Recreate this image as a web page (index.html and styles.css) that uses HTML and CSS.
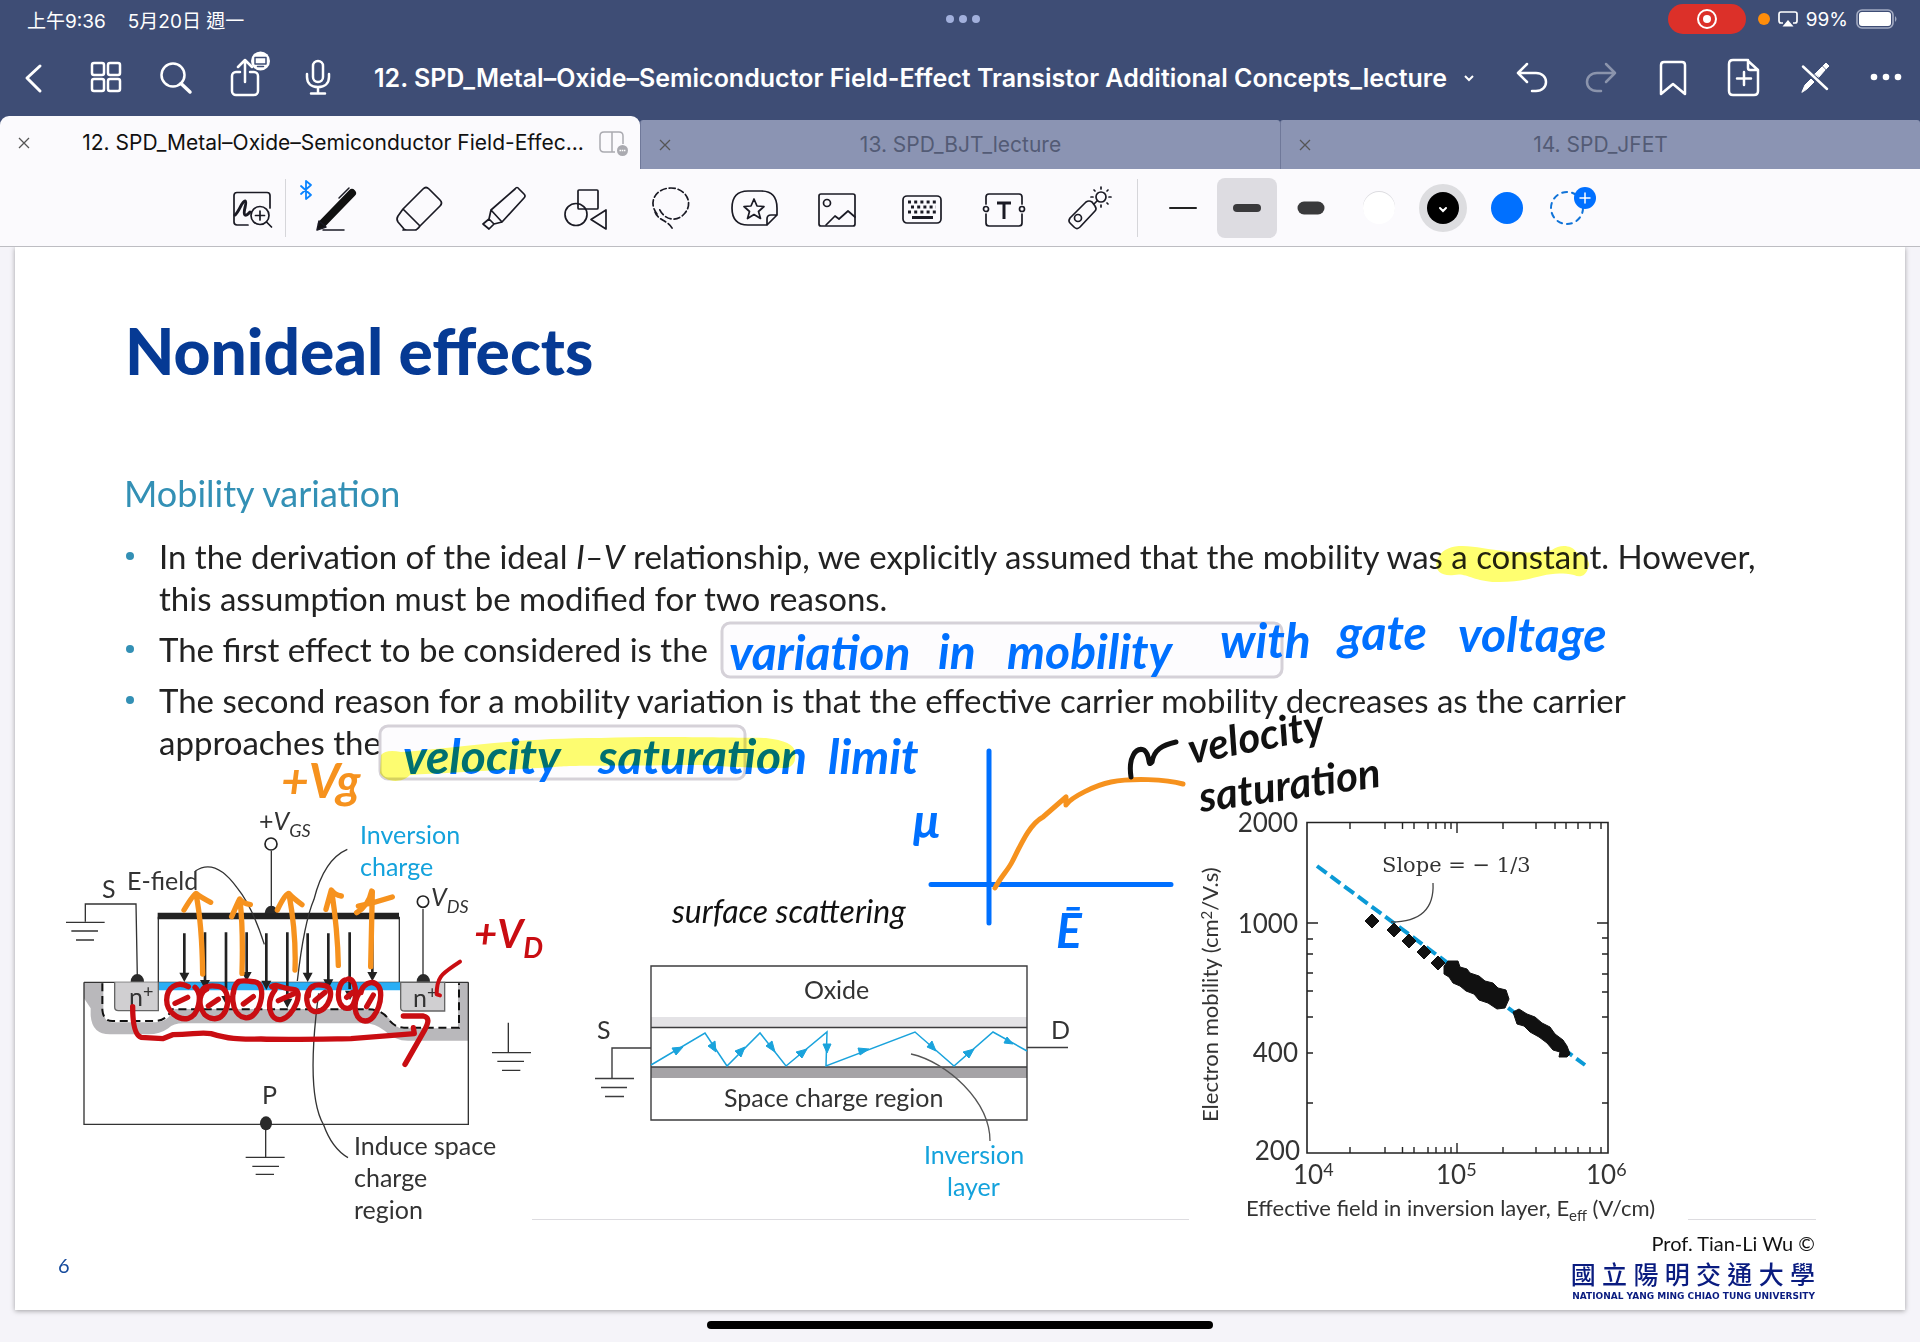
FILE: index.html
```html
<!DOCTYPE html>
<html lang="zh-Hant">
<head>
<meta charset="utf-8">
<title>12. SPD_Metal–Oxide–Semiconductor Field-Effect Transistor Additional Concepts_lecture</title>
<meta name="viewport" content="width=device-width, initial-scale=1">
<link rel="stylesheet" href="styles.css">
</head>
<body>
<header class="topbar">
  <div class="status">
    <div class="status-side"><span>上午9:36</span><span>5月20日 週一</span></div>
    <svg class="multitask" width="36" height="12" viewBox="0 0 36 12" aria-hidden="true"><circle cx="5" cy="6" r="4"/><circle cx="18" cy="6" r="4"/><circle cx="31" cy="6" r="4"/></svg>
    <div class="status-side status-right">
      <span class="rec"><svg width="24" height="24" viewBox="0 0 24 24"><circle cx="12" cy="12" r="9" fill="none" stroke="#fff" stroke-width="2"/><circle cx="12" cy="12" r="4" fill="#fff"/></svg></span>
      <span class="mic-dot"></span>
      <svg width="20" height="18" viewBox="0 0 20 18"><path d="M5 13H3a2 2 0 0 1-2-2V4a2 2 0 0 1 2-2h14a2 2 0 0 1 2 2v7a2 2 0 0 1-2 2h-2" fill="none" stroke="#fff" stroke-width="1.7"/><path d="M10 10l5.500 6.500h-11z" fill="#fff"/></svg>
      <span>99%</span>
      <svg class="battery" width="42" height="20" viewBox="0 0 42 20"><rect x="1" y="1" width="36" height="18" rx="5" fill="none" stroke="#a3abc2" stroke-width="1.600"/><rect x="3" y="3" width="32" height="14" rx="3" fill="#fff"/><path d="M39 7q3 3 0 6z" fill="#a3abc2"/></svg>
    </div>
  </div>
  <nav class="nav">
    <div class="nav-group">
      <button class="icon-btn" aria-label="Back"><svg viewBox="0 0 48 48"><path d="M30 12 17 24l13 13" stroke-width="3"/></svg></button>
      <button class="icon-btn" aria-label="Pages"><svg viewBox="0 0 48 48"><rect x="11" y="9" width="12" height="12" rx="2"/><rect x="27" y="9" width="12" height="12" rx="2"/><rect x="11" y="25" width="12" height="12" rx="2"/><rect x="27" y="25" width="12" height="12" rx="2"/></svg></button>
      <button class="icon-btn" aria-label="Search"><svg viewBox="0 0 48 48"><circle cx="21" cy="21" r="11.500"/><path d="M29 29.500 38 38" stroke-width="3.500"/></svg></button>
      <button class="icon-btn" aria-label="Share"><svg viewBox="0 0 48 48"><path d="M17 18h-4a4 4 0 0 0-4 4v15a4 4 0 0 0 4 4h18a4 4 0 0 0 4-4V22a4 4 0 0 0-4-4h-4M22 28V7M15 13l7-7 7 7"/><circle cx="37.500" cy="7" r="9.500" fill="#fff" stroke="none"/><path d="M32 3.500h11v6.500H32zM34.500 12.500h6" stroke="#3e4d75" stroke-width="1.500"/></svg></button>
      <button class="icon-btn" aria-label="Record"><svg viewBox="0 0 48 48"><rect x="19" y="7" width="10" height="21" rx="5"/><path d="M13 20v3c0 6 4 10 11 10s11-4 11-10v-3M24 33v6M17 39.500h14"/></svg></button>
    </div>
    <button class="doc-title"><span>12. SPD_Metal–Oxide–Semiconductor Field-Effect Transistor Additional Concepts_lecture</span><svg width="12" height="12" viewBox="0 0 12 12"><path d="M2 4l4 4 4-4"/></svg></button>
    <div class="nav-group">
      <button class="icon-btn" aria-label="Undo"><svg viewBox="0 0 48 48"><path d="M20 10 11 19l9 9M11 19h18c6 0 10 4 10 9s-4 9-10 9h-4"/></svg></button>
      <button class="icon-btn faded" aria-label="Redo"><svg viewBox="0 0 48 48"><path d="M28 10l9 9-9 9M37 19H19c-6 0-10 4-10 9s4 9 10 9h4"/></svg></button>
      <button class="icon-btn" aria-label="Bookmark"><svg viewBox="0 0 48 48"><path d="M12 40V11q0-3 3-3h18q3 0 3 3v29L24 30z"/></svg></button>
      <button class="icon-btn" aria-label="Add page"><svg viewBox="0 0 48 48"><path d="M27 6H13q-4 0-4 4v27q0 4 4 4h21q4 0 4-4V16zM28 6v8q0 2 2 2h8M24 18v13M17 24.500h14"/></svg></button>
      <button class="icon-btn" aria-label="Read only"><svg viewBox="0 0 48 48"><path d="M12 12.500 36 35"/><path d="M11 38l3-7 6-6 3 3-7 7zM24 20l7-7 3 3-6 7zM32 12l3-3 3 3-3 3z" fill="#fff" stroke-width="1"/></svg></button>
      <button class="icon-btn" aria-label="More"><svg viewBox="0 0 48 48"><g fill="#fff" stroke="none"><circle cx="12" cy="23" r="3.300"/><circle cx="24" cy="23" r="3.300"/><circle cx="36" cy="23" r="3.300"/></g></svg></button>
    </div>
  </nav>
  <div class="tabs">
    <div class="tab active"><button class="close" aria-label="Close tab"><svg viewBox="0 0 12 12"><path d="M1 1l10 10M11 1 1 11"/></svg></button><a href="#slide">12. SPD_Metal–Oxide–Semiconductor Field-Effec...</a><svg class="split" width="30" height="26" viewBox="0 0 30 26"><path d="M16 21H5q-4 0-4-4V5q0-4 4-4h15q4 0 4 4v8M13 1v20" fill="none" stroke="#aaaab0" stroke-width="1.500"/><circle cx="23.500" cy="19.500" r="5.500" fill="#aaaab0"/><path d="M20.500 19.500h1.500m.7 0h1.500m.7 0h1.500" stroke="#fff" stroke-width="1.500"/></svg></div>
    <div class="tab"><button class="close" aria-label="Close tab"><svg viewBox="0 0 12 12"><path d="M1 1l10 10M11 1 1 11"/></svg></button><a href="#bjt">13. SPD_BJT_lecture</a></div>
    <div class="tab"><button class="close" aria-label="Close tab"><svg viewBox="0 0 12 12"><path d="M1 1l10 10M11 1 1 11"/></svg></button><a href="#jfet">14. SPD_JFET</a></div>
  </div>
</header>

<div class="tools" role="toolbar" aria-label="Drawing tools">
  <button class="tool narrow" aria-label="Zoom window"><svg viewBox="0 0 48 48"><path d="M20 41H9q-3 0-3-3V11.500q0-3 3-3h30q3 0 3 3V24"/><path d="M7 31c4-3 7-14 10-14 3 1-3 12 0 14 2 1 3-1 5-3" stroke-width="3"/><circle cx="32" cy="31.500" r="9"/><path d="M38.500 38l5 5M27.500 31.500h9M32 27v9"/></svg></button>
  <span class="rule"></span>
  <button class="tool" aria-label="Pen"><svg viewBox="0 0 48 48"><path d="M40 9 10 40" stroke="#111" stroke-width="8"/><path d="M5 46l2-9 7 6zM11 46h21M27 14l10-10" stroke-width="1.500" fill="#111"/><path d="M-11 2l10 9-5 4V-3l5 4-10 9" stroke="#0a84ff" stroke-width="1.800"/></svg></button>
  <button class="tool" aria-label="Eraser"><svg viewBox="0 0 48 48"><path d="M27 5q3-3 6 0l11 11q3 3 0 6L24 42 7 25zM7 25l-5 7q-2 3 0 6l6 7q1 1 3 1h8q2 0 5-4M7 46h13"/></svg></button>
  <button class="tool" aria-label="Highlighter"><svg viewBox="0 0 48 48"><path d="M35 5q2-3 4 0l5 5q2 2 0 4L22 38 11 26zM11 26l-2 9 5 5 8-2M9 35l-6 5 6 5 5-5"/></svg></button>
  <button class="tool" aria-label="Shapes"><svg viewBox="0 0 48 48"><rect x="14" y="6" width="20" height="19" rx="1"/><circle cx="12" cy="30.500" r="11"/><path d="M27 35.500 42 26v19z"/></svg></button>
  <button class="tool" aria-label="Lasso"><svg viewBox="0 0 48 48"><path d="M9 30c-10-13 0-26 14-26s23 14 14 25-22 6-26-5M7 28c3 9 14 8 18 18" stroke-dasharray="6 3"/></svg></button>
  <button class="tool" aria-label="Sticker"><svg viewBox="0 0 48 48"><path d="M35 41H16Q0 41 0 24T16 7h13q16 0 16 17v7L35 41v-6q0-4 4-4h6"/><path d="M22 15l3 7 7 .5-5.500 5 2 7-6.500-4-6.500 4 2-7-5.500-5 7-.5z"/></svg></button>
  <button class="tool" aria-label="Image"><svg viewBox="0 0 48 48"><rect x="3" y="10" width="36" height="32" rx="2"/><circle cx="11" cy="19" r="3.500"/><path d="M10 41l9-9 4 3 9-8 7 6"/></svg></button>
  <button class="tool" aria-label="Keyboard"><svg viewBox="0 0 48 48"><rect x="3" y="12" width="38" height="27" rx="4"/><g stroke-width="3"><path d="M8 18h29M11 23h25M8 28h29" stroke-dasharray="3 3.200" stroke-linecap="butt"/><path d="M12 33.500h21" stroke-linecap="butt"/></g></svg></button>
  <button class="tool" aria-label="Text"><svg viewBox="0 0 48 48"><path d="M2 20v-7q0-3 3-3h30q3 0 3 3v7M2 30v9q0 3 3 3h30q3 0 3-3v-9"/><circle cx="2" cy="25" r="2.500"/><circle cx="38" cy="25" r="2.500"/><path d="M13 19h14M20 19v16" stroke-width="3" stroke-linecap="butt"/></svg></button>
  <button class="tool" aria-label="Laser pointer"><svg viewBox="0 0 48 48"><path d="M2 34 18 18q3-2 6 0l3 4q2 3 0 5L12 43q-3 3-6 0l-4-4q-2-2 0-5M26 20l3-3"/><circle cx="10" cy="34" r="3.500"/><circle cx="33" cy="13" r="5"/><path d="M33 5V3M33 23v-2M25 13h-2M43 13h-2M27 7l-1-1M39 7l1-1M39 19l1 1"/></svg></button>
  <span class="rule"></span>
  <div class="widths">
    <button class="choice" aria-label="Thin"><svg viewBox="0 0 60 60"><path d="M17 30h26" stroke="#222" stroke-width="2"/></svg></button>
    <button class="choice chosen" aria-label="Medium"><svg viewBox="0 0 60 60"><path d="M20 30h20" stroke="#3a3a3c" stroke-width="8"/></svg></button>
    <button class="choice" aria-label="Thick"><svg viewBox="0 0 60 60"><path d="M23 30h14" stroke="#3a3a3c" stroke-width="13"/></svg></button>
  </div>
  <div class="colors">
    <button class="choice" aria-label="White"><svg viewBox="0 0 60 60"><circle cx="30" cy="29" r="16" fill="#dcdce0"/><circle cx="30" cy="30" r="16" fill="#fff"/></svg></button>
    <button class="choice" aria-label="Black"><svg viewBox="0 0 60 60"><circle cx="30" cy="30" r="24" fill="#dddde0"/><circle cx="30" cy="30" r="16" fill="#000"/><path d="M27 30l3 3 3-3" stroke="#fff" stroke-width="2"/></svg></button>
    <button class="choice" aria-label="Blue"><svg viewBox="0 0 60 60"><circle cx="30" cy="30" r="16" fill="#0070ff"/></svg></button>
    <button class="choice" aria-label="Add colour"><svg viewBox="0 0 60 60"><circle cx="26" cy="30" r="16" stroke="#1073d8" stroke-width="2" stroke-dasharray="5 5"/><circle cx="44" cy="20" r="11" fill="#0070ff"/><path d="M39 20h10M44 15v10" stroke="#fff" stroke-width="1.500"/></svg></button>
  </div>
</div>

<main class="desk">
<article class="slide" id="slide">
  <h1>Nonideal effects</h1>
  <h2>Mobility variation</h2>
  <ul class="points">
    <li>In the derivation of the ideal <i>I–V</i> relationship, we explicitly assumed that the mobility was a constant. However, <br>this assumption must be modified for two reasons.</li>
    <li>The first effect to be considered is the</li>
    <li>The second reason for a mobility variation is that the effective carrier mobility decreases as the carrier <br>approaches the</li>
  </ul>

  <div class="figures">
    <svg class="fig fig-device" viewBox="60 790 480 440" role="img" aria-label="MOSFET cross-section">
      <g transform="translate(60 760) scale(.33333)" fill="none" stroke="#333" stroke-width="4">
        <path d="M72 667h58v90q4 28 24 30h130q40 0 60-40h560q60 0 80 25 30 40 50 33h160V667h30v175h-180q-40 0-70-30-30-22-60-22H370q-30 0-45 15-25 18-60 18H150q-55 0-58-58v-20l-20-30z" fill="#b9b8bb" stroke="none"/>
        <path d="M72 667v426h1153V667M72 667h1153"/>
        <path d="M127 670v80q3 33 30 33h130q30 0 50-35h585q40 0 60 25 20 30 50 30h165V670" stroke="#111" stroke-width="6" stroke-dasharray="24 14"/>
        <path d="M295 667v85H175q-11 0-11-11v-74M1022 667v76q0 10 12 10h120v-86z" fill="#d0cfd1" stroke="#666"/>
        <path d="M295 470v197M1018 470v197"/>
        <path d="M297 679h723" stroke="#2aaef5" stroke-width="24"/>
        <path d="M293 468h724" stroke="#222" stroke-width="19"/>
        <path d="M634 272v180M1089 447v205M76 485v-53h152l4 220"/>
        <path d="M18 487h116M34 513h80M48 540h54M617 1093v99M557 1192h117M577 1219h80M587 1243h55M1345 788v90M1296 878h117M1312 904h80M1326 931h55"/>
        <circle cx="633" cy="252" r="18" stroke="#222" stroke-width="5"/><circle cx="1089" cy="425" r="17" stroke="#222" stroke-width="5"/>
        <g fill="#2a2a2a" stroke="none"><path d="M614 460a20 23 0 0 1 40 0zM212 665a20 23 0 0 1 40 0zM1070 665a20 23 0 0 1 40 0z"/><ellipse cx="618" cy="1090" rx="18" ry="21"/></g>
        <g stroke="#222" stroke-width="8"><path d="M373 520v125M435 517v150M498 517v200M560 517v130M619 520v150M682 517v205M743 520v125M805 520v145M869 517v170M937 520v125"/></g>
        <path d="M358 638h30l-15 28zM420 660h30l-15 28zM484 708h30l-15 28zM545 636h30l-15 28zM604 662h30l-15 28zM667 716h30l-15 28zM728 638h30l-15 28zM790 658h30l-15 28zM855 692h30l-15 28zM922 636h30l-15 28z" fill="#222" stroke="none"/>
        <path d="M406 333q60-40 125 50 45 55 82 170M862 268q-70 30-100 150-30 70-50 245M776 700q-40 300 15 395 25 70 73 98"/>
      </g>
      <g class="label">
        <text x="259" y="830">+<tspan class="it">V</tspan><tspan class="it sub" dy="7">GS</tspan></text>
        <text x="360" y="844" class="cyan">Inversion</text><text x="360" y="876" class="cyan">charge</text>
        <text x="102" y="898">S</text><text x="127" y="890">E-field</text>
        <text x="431" y="906"><tspan class="it">V</tspan><tspan class="it sub" dy="7">DS</tspan></text>
        <text x="129" y="1006">n<tspan class="sub" dy="-8">+</tspan></text><text x="413" y="1007">n<tspan class="sub" dy="-8">+</tspan></text>
        <text x="262" y="1104">P</text>
        <text x="354" y="1155">Induce space</text><text x="354" y="1187">charge</text><text x="354" y="1219">region</text>
      </g>
    </svg>

    <svg class="fig fig-scatter" viewBox="560 790 560 440" role="img" aria-label="Surface scattering">
      <path d="M651 1017h376v10H651z" fill="#e4e3e6"/><path d="M651 1067h376v11H651z" fill="#a5a3a6"/>
      <path d="M651 966h376v154H651zM651 1027.500h376M651 1067h376M1027 1047.500h41M651 1048h-39v30M595 1078.500h39M601 1087.500h26M605 1096.500h19" fill="none" stroke="#3c3c3e" stroke-width="1.400"/>
      <path d="M651 1065l54-32 22 33 33-33 26 33 41-34-1 34 89-34 39 34 39-34 34 19" fill="none" stroke="#1aa3dc" stroke-width="1.500"/>
      <path d="M683 1047l-7 8-4-7zM716 1052l-8-6 7-5zM745 1047l-4 10-6-6zM775 1052l-9-6 6-5zM807 1049l-5 9-6-6zM827 1053l-4-9h8zM869 1049l-9 6-2-7zM936 1051l-9-4 5-6zM974 1049l-5 9-6-6zM1013 1044l-9-1 3-6z" fill="#1aa3dc" stroke="#1aa3dc"/>
      <path d="M911 1054c36 8 79 47 79 87" fill="none" stroke="#555" stroke-width="1.300"/>
      <g class="label">
        <text x="672" y="923" class="caption">surface scattering</text>
        <text x="804" y="999">Oxide</text><text x="724" y="1107">Space charge region</text>
        <text x="597" y="1039">S</text><text x="1051" y="1039">D</text>
        <text x="924" y="1164" class="cyan">Inversion</text><text x="947" y="1196" class="cyan">layer</text>
      </g>
    </svg>

    <svg class="fig fig-plot" viewBox="1160 790 560 440" role="img" aria-label="Electron mobility against effective field">
      <path d="M1307 822.500h301V1153h-301z" fill="none" stroke="#222" stroke-width="1.600"/>
      <path d="M1350 823v6m35-6v6m17.500-6v6m11.500-6v6m14-6v6m8-6v6m9-6v6m6-6v6m6-6v10m46-10v6m33-6v6m19-6v6m11-6v6m12-6v6m12-6v6m11-6v6M1350 1153v-6m35 6v-6m17.500 6v-6m11.500 6v-6m14 6v-6m8 6v-6m9 6v-6m6 6v-6m6 6v-10m46 10v-6m33 6v-6m19 6v-6m11 6v-6m12 6v-6m12 6v-6m11 6v-6M1307 923h11m-11 16h6m-6 15h6m-6 19h6m-6 18h6m-6 26h6m-6 36h6m-6 50h6M1608 923h-11m11 15h-6m6 16h-6m6 20h-6m6 18h-6m6 25h-6m6 36h-6m6 50h-6" fill="none" stroke="#222" stroke-width="1.400"/>
      <path d="M1317 866l268 199" stroke="#0b9ad6" stroke-width="4" stroke-dasharray="12 5"/>
      <path d="M1433 883q2 39-42 39" fill="none" stroke="#444" stroke-width="1.300"/>
      <g fill="#111" stroke="#111" stroke-linejoin="round"><path d="M1372 914l7 7-7 7-7-7zM1394 923l7 7-7 7-7-7zM1409 934l7 7-7 7-7-7zM1424 945l7 7-7 7-7-7zM1438 956l7 7-7 7-7-7z"/><path d="M1444 966l4-5h10l2 6 7 2 3 4 9 3 6 5 8 2 5 5 8 2 3 9-4 9-8 1-9-6-9-3-5-6-8-3-6-5-7-3-4-6-5-3z"/><path d="M1513 1012l6-3 8 5 8 3 7 6 8 4 5 7 8 6 4 6 3 8-3 3h-8l1-5-7-2-6-7-8-6-9-5-6-6-7-2z"/></g>
      <g class="label plot-label">
        <text x="1298" y="832" text-anchor="end">2000</text><text x="1298" y="933" text-anchor="end">1000</text><text x="1298" y="1062" text-anchor="end">400</text><text x="1300" y="1160" text-anchor="end">200</text>
        <text x="1293" y="1184">10<tspan class="sub" dy="-8">4</tspan></text><text x="1436" y="1184">10<tspan class="sub" dy="-8">5</tspan></text><text x="1586" y="1184">10<tspan class="sub" dy="-8">6</tspan></text>
        <text x="1246" y="1216" class="axis">Effective field in inversion layer, E<tspan class="subs" dy="5">eff</tspan><tspan dy="-5"> (V/cm)</tspan></text>
        <text transform="translate(1218 1122) rotate(-90)" class="axis">Electron mobility (cm<tspan class="subs" dy="-6">2</tspan><tspan dy="6">/V.s)</tspan></text>
        <text x="1382" y="872" class="slope">Slope = − 1/3</text>
      </g>
    </svg>
  </div>

  <footer class="foot">
    <div class="foot-rule"><span></span><span></span></div>
    <div class="foot-row">
      <span class="page">6</span>
      <div class="credit"><span class="prof">Prof. Tian-Li Wu ©</span><strong>國 立 陽 明 交 通 大 學</strong><small>NATIONAL YANG MING CHIAO TUNG UNIVERSITY</small></div>
    </div>
  </footer>

  <svg class="ink" viewBox="15 247 1890 1063" aria-label="Handwritten notes">
    <g fill="#fdfcfe" stroke="#d5d1d8" stroke-width="3"><rect x="722" y="623" width="560" height="54" rx="8"/><rect x="380" y="726" width="365" height="53" rx="8"/></g>
    <g class="hand blue">
      <text x="729" y="670">variation</text><text x="938" y="669">in</text><text x="1007" y="669">mobility</text><text x="1220" y="658">with</text><text x="1338" y="650">gate</text><text x="1458" y="652">voltage</text>
      <text x="403" y="774">velocity</text><text x="598" y="774">saturation</text><text x="828" y="774">limit</text>
      <text x="913" y="838">μ</text><text x="1056" y="948">Ē</text>
    </g>
    <g class="marker"><path d="M1438 558c8-16 30-12 44-10 30 5 55 6 70 2 8-6 20-5 24 2 12 4 15 12 12 16-2 8-8 10-14 7-30-6-38 8-78 7-24-1-30-10-42-7-18 2-20-10-16-17z"/><path d="M381 755q5-6 20-3c50-3 110-14 200-14 60-2 130 0 165 0q28 3 29 14 2 15-10 16c-60 0-60-3-100-3-50 1-120 0-130 2-50 3-110 6-145 8-10 10-26 6-30-2z"/></g>
    <path d="M989 751v172M931 884.500h240" stroke="#0070ff" stroke-width="5"/>
    <path d="M995 888c5-10 13-18 17-26 10-20 18-38 31-45l23-20v8c5-8 30-20 45-23 20-4 55-3 72 2" stroke="#f6921e" stroke-width="5"/>
    <path d="M1131 777c-3-20 5-30 13-27 7 5 3 18 8 12 2-12 10-17 24-20" stroke="#111" stroke-width="5"/>
    <g class="hand black"><text transform="translate(1191 764) rotate(-11)">velocity</text><text transform="translate(1201 812) rotate(-8)">saturation</text></g>
    <g class="hand orange"><text x="281" y="798">+Vg</text></g>
    <g class="hand red"><text x="474" y="948">+V<tspan class="sub" dy="10">D</tspan></text></g>
    <g transform="translate(60 760) scale(.33333)" stroke-width="16">
      <path d="M372 450q30-50 36-50 14 12 44 27M408 402q18 90 20 240M515 470q15-35 24-53 8 12 32 17M540 420q10 90 6 220M652 450q24-50 34-50 12 14 40 34M687 402q22 120 18 228M798 448l16-58q10 15 30 18M815 392q18 120 20 224M890 458q35-20 45-65M895 438q50-10 102-27M937 395l-5 225" stroke="#f6921e"/>
      <g stroke="#c90d12"><path d="M385 680c-35-20-65 5-65 40s35 62 65 55 45-70 20-93M345 730l38-18M440 688c-30 10-28 82 20 88s60-90 15-97-50 10-55 30M445 738l30-20M535 665c-25 20-25 100 20 108s70-100 30-107-60-10-65 35M550 732l30-22M645 690c-30 40-15 95 20 88s70-90 35-90-50-20-65-8M655 722l45-20M760 680c-30 10-25 75 10 75s60-70 25-78-50 5-50 30M765 722l30-25M855 660c-25 10-30 80 5 85s35-90 5-88M860 712l18-15M905 690c-30 30-25 90 10 93s60-80 40-105-50 0-52 20M920 740l20-35"/><path d="M218 740c0 40 5 85 25 92l65 4 30-12c60 0 80-8 115-3 50 15 80 18 150 16 80 3 200 0 270-1l190-15-3-18M1030 768h60c20 5 15 20 5 40l-60 105"/><path d="M1200 605c-50 35-70 40-70 98l10 3" stroke-width="12"/></g>
    </g>
  </svg>
</article>
<div class="home-bar"></div>
</main>
</body>
</html>
```
FILE: styles.css
```css
* { box-sizing: border-box; }
body { margin: 0; min-height: 100vh; display: flex; flex-direction: column; background: #f5f4f9; font-family: Inter, "Noto Sans CJK TC", sans-serif; }
button { border: 0; padding: 0; background: none; font: inherit; color: inherit; }
a { color: inherit; text-decoration: none; }
svg { display: block; overflow: visible; }

.topbar { background: #3e4d75; color: #fff; }
.status { display: grid; grid-template-columns: 1fr auto 1fr; align-items: center; height: 38px; padding: 0 22px 0 27px; font-size: 19px; }
.status-side { display: flex; align-items: center; gap: 22px; }
.status-right { justify-content: flex-end; gap: 8px; }
.multitask { fill: #a2b0dc; }
.rec { display: flex; align-items: center; justify-content: center; width: 78px; height: 36px; border-radius: 18px; background: #dc3029; margin-right: 4px; }
.rec { height: 30px; }
.mic-dot { width: 12px; height: 12px; border-radius: 6px; background: #ff8d0a; }

.nav { display: flex; align-items: center; justify-content: space-between; height: 78px; padding: 2px 10px 0; }
.nav-group { display: flex; gap: 23px; }
.icon-btn { width: 48px; height: 48px; }
.icon-btn svg, .tool svg { width: 48px; height: 48px; fill: none; stroke: #fff; stroke-width: 2.5; stroke-linecap: round; stroke-linejoin: round; }
.faded { opacity: .4; }
.doc-title { display: flex; align-items: center; gap: 16px; font-size: 25px; font-weight: 600; white-space: nowrap; }
.doc-title svg { fill: none; stroke: #fff; stroke-width: 2; }

.tabs { display: grid; grid-template-columns: repeat(3, 1fr); align-items: end; height: 53px; }
.tab { position: relative; display: flex; align-items: center; justify-content: center; height: 49px; background: #8b94b3; color: #535b75; border-left: 1px solid #6f7899; border-radius: 3px 3px 0 0; font-size: 21px; }
.tab.active { height: 53px; background: #fbfafd; color: #111; border: 0; border-radius: 9px 9px 0 0; padding-left: 26px; }
.close { position: absolute; left: 18px; top: 50%; width: 12px; height: 12px; margin-top: -6px; }
.close svg { width: 12px; height: 12px; stroke: #555; stroke-width: 1.3; }
.split { position: absolute; right: 11px; top: 15px; }

.tools { display: flex; align-items: center; height: 78px; padding-left: 219px; background: #fbfafd; border-bottom: 1px solid #bdbdc2; }
.tool { display: flex; justify-content: center; width: 84px; flex: none; }
.tool svg { stroke: #1a1a24; stroke-width: 1.7; }
.tool.narrow { width: 66px; }
.rule { width: 1px; height: 58px; flex: none; margin: 0 15px 0 3px; background: #d6d6da; }
.narrow + .rule { margin: 0 8px 0 0; }
.widths, .colors { display: flex; gap: 4px; }
.colors { margin-left: 8px; }
.choice { width: 60px; height: 60px; border-radius: 8px; }
.choice svg { width: 60px; height: 60px; fill: none; stroke-linecap: round; }
.chosen { background: #dddce1; }

.desk { flex: 1; padding: 0 15px 12px; }
.slide { position: relative; background: #fff; box-shadow: 0 1px 5px rgba(0, 0, 0, .35); clip-path: inset(0 -10px -10px -10px); padding-bottom: 8px; font-family: Lato, "Noto Sans CJK TC", sans-serif; color: #222; }
h1 { margin: 0; padding: 68px 110px 0; font-size: 64px; line-height: 72px; font-weight: 900; color: #063a94; }
h2 { margin: 0; padding: 82px 109px 0; font-size: 36px; line-height: 48px; font-weight: 400; color: #3390b5; }
.points { list-style: none; margin: 0; padding: 18px 109px 0; display: flex; flex-direction: column; gap: 9px; font-size: 33px; line-height: 42px; white-space: nowrap; }
.points li { position: relative; padding-left: 35px; }
.points li::before { content: ""; position: absolute; left: 2px; top: 17px; width: 8px; height: 8px; border-radius: 4px; background: #3390b5; }

.figures { display: flex; padding: 27px 185px 0 45px; }
.fig { flex: 560 1 0; min-width: 0; }
.fig-device { flex-grow: 480; margin-right: 20px; }
.fig-scatter { margin-right: 40px; }
.label { font-size: 25px; fill: #333; }
.it { font-style: italic; }
.sub { font-size: 18px; }
.cyan { fill: #14a2dc; }
.caption { font-size: 32px; font-style: italic; fill: #111; }
.plot-label { font-size: 26px; }
.axis { font-size: 22px; }
.subs { font-size: 15px; }
.slope { font-family: "DejaVu Serif", serif; font-size: 21px; }

.foot-rule { display: flex; justify-content: space-between; margin: -11px 89px 0 517px; }
.foot-rule span { width: 657px; height: 1px; background: #dddce0; }
.foot-rule span + span { width: 128px; }
.foot-row { display: flex; justify-content: space-between; align-items: center; padding: 8px 90px 0 43px; }
.page { font-size: 20px; color: #154a9c; }
.credit { display: flex; flex-direction: column; align-items: flex-end; }
.prof { font-size: 20px; line-height: 30px; color: #111; }
.credit strong { font-size: 25px; line-height: 32px; font-weight: 500; color: #0a1c80; white-space: nowrap; }
.credit small { font: 700 9px/12px "DejaVu Sans", sans-serif; color: #0a1c80; white-space: nowrap; }

.ink { position: absolute; left: 0; top: 0; width: 100%; fill: none; stroke-linecap: round; stroke-linejoin: round; pointer-events: none; }
.hand { font-size: 48px; font-weight: 700; font-style: italic; }
.blue { fill: #0070ff; }
.black { fill: #111; font-size: 42px; }
.orange { fill: #f6921e; }
.red { fill: #c90d12; font-size: 40px; }
.red .sub { font-size: 28px; }
.marker { fill: #ffff70; mix-blend-mode: multiply; }
.home-bar { width: 506px; height: 8px; margin: 11px auto 0; border-radius: 4px; background: #000; }
```
